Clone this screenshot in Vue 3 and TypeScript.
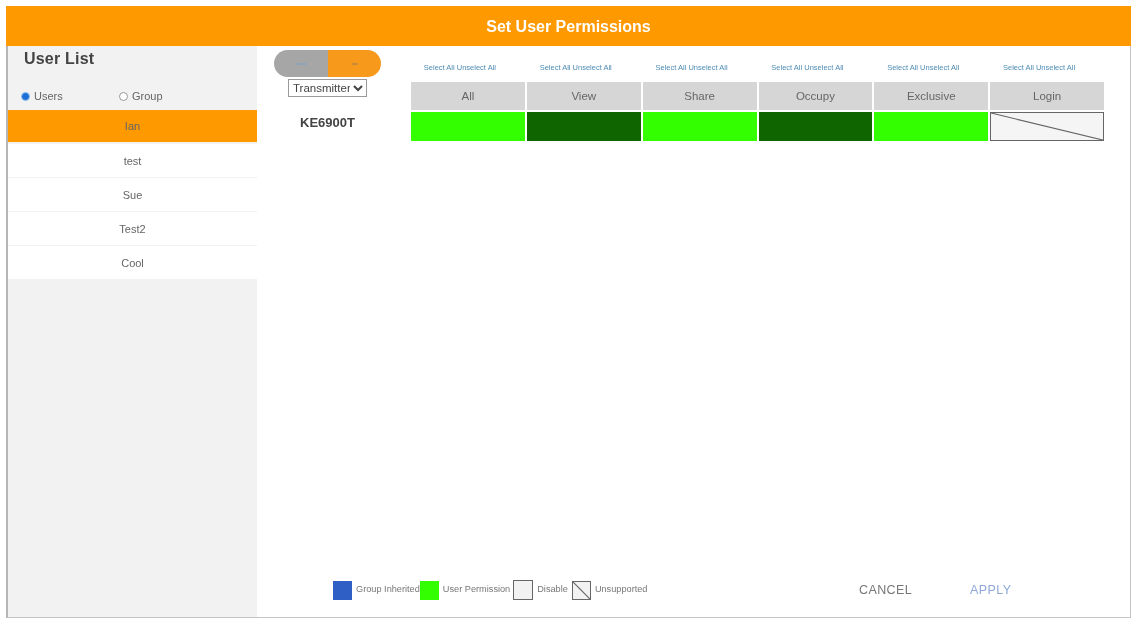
<script setup lang="ts">
const users = ['Ian', 'test', 'Sue', 'Test2', 'Cool']
const columns = ['All', 'View', 'Share', 'Occupy', 'Exclusive', 'Login']
const states = ['on', 'off', 'on', 'off', 'on', 'none']
</script>

<template>
  <div class="page">
    <div class="frame">
      <header class="title">Set User Permissions</header>
      <div class="body">
        <aside class="side">
          <h2 class="side-title">User List</h2>
          <div class="radios">
            <label class="radio"><span class="dot dot-on"></span>Users</label>
            <label class="radio"><span class="dot"></span>Group</label>
          </div>
          <ul class="users">
            <li v-for="(u, i) in users" :key="u" class="user" :class="{ active: i === 0 }">{{ u }}</li>
          </ul>
        </aside>
        <main class="main">
          <div class="top">
            <div class="device">
              <div class="toggle">
                <span class="tog tog-l"><span class="tog-mark"></span></span>
                <span class="tog tog-r"><span class="tog-mark tog-mark-r"></span></span>
              </div>
              <select class="picker"><option>Transmitter</option></select>
              <div class="device-name">KE6900T</div>
            </div>
            <div class="grid">
              <div v-for="c in columns" :key="c" class="links">Select All Unselect All</div>
              <div v-for="c in columns" :key="c + 'h'" class="head">{{ c }}</div>
              <div v-for="(s, i) in states" :key="i" class="cell" :class="s">
                <svg v-if="s === 'none'" class="diag" viewBox="0 0 100 100" preserveAspectRatio="none">
                  <line x1="0" y1="0" x2="100" y2="100" vector-effect="non-scaling-stroke" />
                </svg>
              </div>
            </div>
          </div>
          <footer class="foot">
            <div class="legend">
              <span class="sw sw-blue"></span><span class="lbl">Group Inherited</span>
              <span class="sw sw-green"></span><span class="lbl">User Permission</span>
              <span class="sw sw-dis"></span><span class="lbl">Disable</span>
              <span class="sw sw-uns">
                <svg class="diag" viewBox="0 0 100 100" preserveAspectRatio="none">
                  <line x1="0" y1="0" x2="100" y2="100" vector-effect="non-scaling-stroke" />
                </svg>
              </span><span class="lbl">Unsupported</span>
            </div>
            <div class="actions">
              <button class="btn cancel">CANCEL</button>
              <button class="btn apply">APPLY</button>
            </div>
          </footer>
        </main>
      </div>
    </div>
  </div>
</template>

<style>
html, body { margin: 0; background: #fff; }
</style>

<style scoped>
.page {
  width: 1134px;
  height: 618px;
  box-sizing: border-box;
  padding: 6px 3px 0 6px;
  background: #fff;
  font-family: "Liberation Sans", Arial, sans-serif;
  overflow: hidden;
  filter: blur(0.55px);
}
.frame {
  height: 100%;
  display: flex;
  flex-direction: column;
  box-sizing: border-box;
  border-left: 2px solid #b5b5b5;
  border-right: 1px solid #c4c4c4;
  border-bottom: 1px solid #c4c4c4;
}
.title {
  height: 40px;
  margin-left: -2px;
  margin-right: -1px;
  background: #ff9900;
  color: #fff;
  font-size: 16px;
  font-weight: 700;
  line-height: 42px;
  text-align: center;
  flex: none;
}
.body { flex: 1; display: flex; min-height: 0; }
.side {
  width: 249px;
  flex: none;
  background: #f2f2f2;
}
.side-title {
  margin: 4px 0 0 16px;
  font-size: 16px;
  line-height: 18px;
  font-weight: 700;
  color: #444;
  letter-spacing: 0.2px;
}
.radios {
  display: flex;
  margin: 20px 0 0 13px;
  height: 16px;
}
.radio {
  display: flex;
  align-items: center;
  gap: 4px;
  width: 98px;
  font-size: 11px;
  color: #666;
}
.dot {
  width: 9px;
  height: 9px;
  border-radius: 50%;
  border: 1px solid #999;
  background: #fff;
  box-sizing: border-box;
}
.dot-on { background: #1c6fd6; border-color: #9cc2ee; }
.users { list-style: none; margin: 6px 0 0; padding: 0; }
.user {
  height: 33px;
  margin-bottom: 1px;
  background: #fff;
  color: #666;
  font-size: 11px;
  line-height: 34px;
  text-align: center;
}
.user.active {
  background: #ff9900;
  height: 32px;
  line-height: 32px;
  margin-bottom: 2px;
}
.main {
  flex: 1;
  display: flex;
  flex-direction: column;
  justify-content: space-between;
  min-width: 0;
}
.top { display: flex; padding: 4px 0 0 17px; }
.device {
  width: 107px;
  flex: none;
  display: flex;
  flex-direction: column;
  align-items: center;
}
.toggle { display: flex; width: 107px; height: 27px; border-radius: 14px; overflow: hidden; }
.tog { display: flex; align-items: center; justify-content: center; }
.tog-l { width: 54px; background: #a6a6a6; }
.tog-r { flex: 1; background: #f79a1c; }
.tog-mark { width: 9px; height: 2px; background: #8fa3b8; }
.tog-mark-r { width: 6px; background: #c98a3a; }
.picker {
  margin-top: 2px;
  width: 79px;
  height: 18px;
  padding: 0;
  font-family: inherit;
  font-size: 11.5px;
  color: #444;
  background: #fff;
  border: 1px solid #9a9a9a;
  border-radius: 0;
}
.device-name {
  margin-top: 18px;
  font-size: 13px;
  font-weight: 700;
  color: #444;
}
.grid {
  margin: 11px 0 0 30px;
  width: 693px;
  display: grid;
  grid-template-columns: repeat(6, 1fr);
  column-gap: 2px;
  grid-template-rows: 19px 28px 29px;
  row-gap: 2px;
}
.links {
  font-size: 7.5px;
  line-height: 13px;
  color: #4f8db5;
  text-align: center;
  white-space: nowrap;
  margin-left: -16px;
}
.head {
  background: #d6d6d6;
  color: #666;
  font-size: 11.5px;
  line-height: 28px;
  text-align: center;
}
.cell { position: relative; box-sizing: border-box; }
.cell.on { background: #33ff00; }
.cell.off { background: #0f6500; }
.cell.none { background: #f5f5f5; border: 1px solid #666; }
.diag { display: block; width: 100%; height: 100%; }
.diag line { stroke: #666; stroke-width: 1.2; }
.foot {
  display: flex;
  align-items: center;
  height: 30px;
  margin-bottom: 12px;
  padding-left: 76px;
}
.legend { display: flex; align-items: center; width: 526px; flex: none; }
.sw { width: 19px; height: 19px; box-sizing: border-box; flex: none; }
.sw-blue { background: #2f5fc4; }
.sw-green { background: #33ff00; }
.sw-dis { background: #f2f2f2; border: 1px solid #666; width: 20px; height: 20px; margin-left: 3px; }
.sw-uns { background: #f2f2f2; border: 1px solid #666; margin-left: 4px; }
.lbl { font-size: 9.2px; color: #777; margin: -3px 0 0 4px; white-space: nowrap; }
.actions { display: flex; gap: 58px; }
.btn {
  border: 0;
  padding: 0;
  background: transparent;
  font-family: inherit;
  font-size: 12.5px;
  letter-spacing: 0.4px;
}
.cancel { color: #777; }
.apply { color: #8fa8d8; }
</style>
